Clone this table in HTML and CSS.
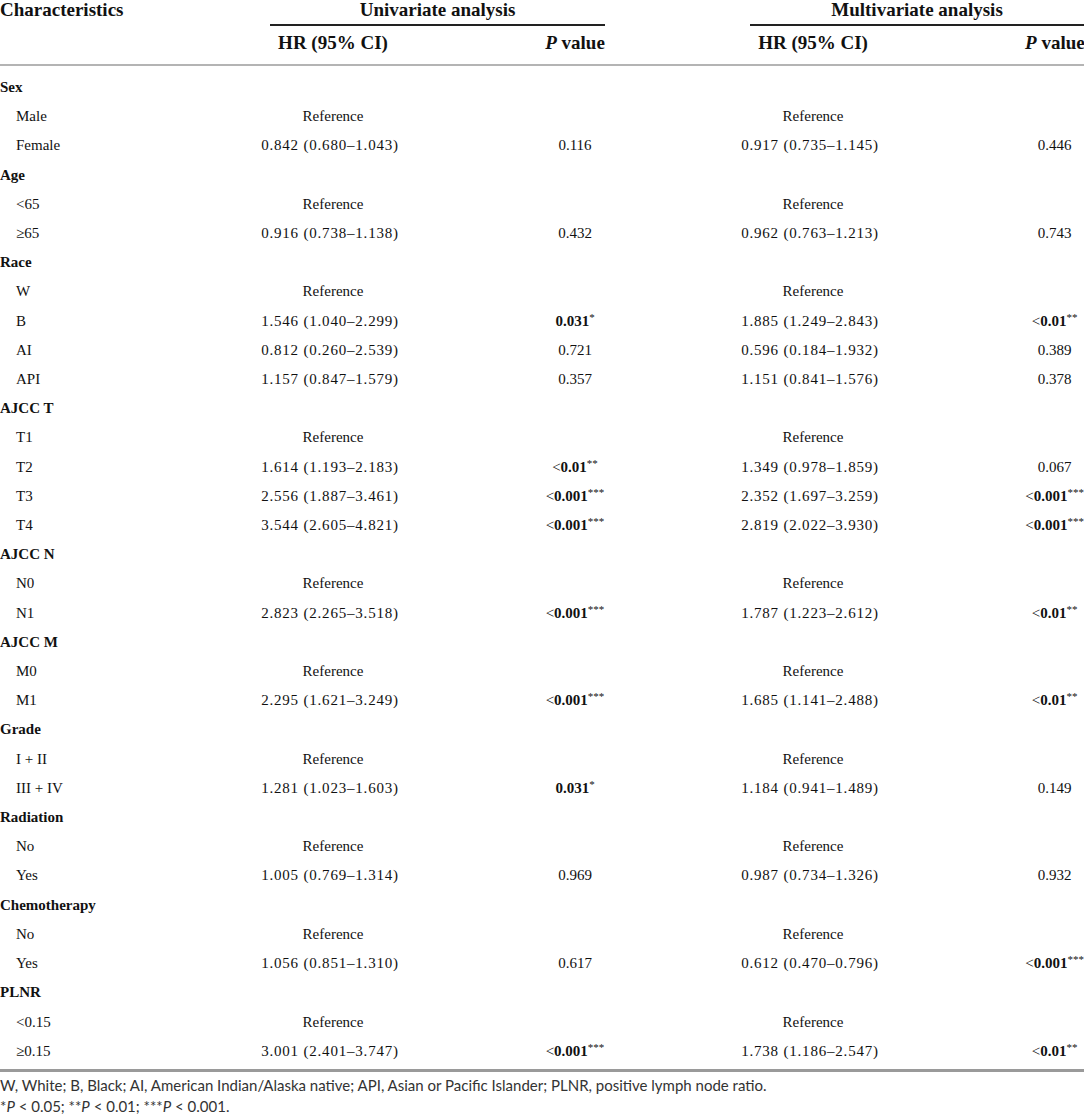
FILE: index.html
```html
<!DOCTYPE html>
<html>
<head>
<meta charset="utf-8">
<link rel="stylesheet" href="styles.css">
</head>
<body>
<table class="tbl">
<colgroup>
<col class="c-char"><col class="c-hr"><col class="c-gap"><col class="c-p"><col class="c-mid"><col class="c-hr"><col class="c-gap"><col class="c-p2">
</colgroup>
<thead>
<tr class="h1">
<th class="th-char">Characteristics</th>
<th colspan="3" class="th-group"><div class="group-title">Univariate analysis</div></th>
<th></th>
<th colspan="3" class="th-group"><div class="group-title">Multivariate analysis</div></th>
</tr>
<tr class="h2">
<th></th>
<th class="ctr">HR (95% CI)</th>
<th></th>
<th class="ctr"><i>P</i> value</th>
<th></th>
<th class="ctr">HR (95% CI)</th>
<th></th>
<th class="ctr"><i>P</i> value</th>
</tr>
</thead>
<tbody>
<tr class="grp first"><td>Sex</td><td></td><td></td><td></td><td></td><td></td><td></td><td></td></tr>
<tr><td class="sub">Male</td><td class="ctr">Reference</td><td></td><td></td><td></td><td class="ctr">Reference</td><td></td><td></td></tr>
<tr><td class="sub">Female</td><td class="ctr hr">0.842 (0.680–1.043)</td><td></td><td class="ctr">0.116</td><td></td><td class="ctr hr">0.917 (0.735–1.145)</td><td></td><td class="ctr">0.446</td></tr>

<tr class="grp"><td>Age</td><td></td><td></td><td></td><td></td><td></td><td></td><td></td></tr>
<tr><td class="sub">&lt;65</td><td class="ctr">Reference</td><td></td><td></td><td></td><td class="ctr">Reference</td><td></td><td></td></tr>
<tr><td class="sub">≥65</td><td class="ctr hr">0.916 (0.738–1.138)</td><td></td><td class="ctr">0.432</td><td></td><td class="ctr hr">0.962 (0.763–1.213)</td><td></td><td class="ctr">0.743</td></tr>

<tr class="grp"><td>Race</td><td></td><td></td><td></td><td></td><td></td><td></td><td></td></tr>
<tr><td class="sub">W</td><td class="ctr">Reference</td><td></td><td></td><td></td><td class="ctr">Reference</td><td></td><td></td></tr>
<tr><td class="sub">B</td><td class="ctr hr">1.546 (1.040–2.299)</td><td></td><td class="ctr"><b>0.031</b><sup>*</sup></td><td></td><td class="ctr hr">1.885 (1.249–2.843)</td><td></td><td class="ctr">&lt;<b>0.01</b><sup>**</sup></td></tr>
<tr><td class="sub">AI</td><td class="ctr hr">0.812 (0.260–2.539)</td><td></td><td class="ctr">0.721</td><td></td><td class="ctr hr">0.596 (0.184–1.932)</td><td></td><td class="ctr">0.389</td></tr>
<tr><td class="sub">API</td><td class="ctr hr">1.157 (0.847–1.579)</td><td></td><td class="ctr">0.357</td><td></td><td class="ctr hr">1.151 (0.841–1.576)</td><td></td><td class="ctr">0.378</td></tr>

<tr class="grp"><td>AJCC T</td><td></td><td></td><td></td><td></td><td></td><td></td><td></td></tr>
<tr><td class="sub">T1</td><td class="ctr">Reference</td><td></td><td></td><td></td><td class="ctr">Reference</td><td></td><td></td></tr>
<tr><td class="sub">T2</td><td class="ctr hr">1.614 (1.193–2.183)</td><td></td><td class="ctr">&lt;<b>0.01</b><sup>**</sup></td><td></td><td class="ctr hr">1.349 (0.978–1.859)</td><td></td><td class="ctr">0.067</td></tr>
<tr><td class="sub">T3</td><td class="ctr hr">2.556 (1.887–3.461)</td><td></td><td class="ctr">&lt;<b>0.001</b><sup>***</sup></td><td></td><td class="ctr hr">2.352 (1.697–3.259)</td><td></td><td class="ctr">&lt;<b>0.001</b><sup>***</sup></td></tr>
<tr><td class="sub">T4</td><td class="ctr hr">3.544 (2.605–4.821)</td><td></td><td class="ctr">&lt;<b>0.001</b><sup>***</sup></td><td></td><td class="ctr hr">2.819 (2.022–3.930)</td><td></td><td class="ctr">&lt;<b>0.001</b><sup>***</sup></td></tr>

<tr class="grp"><td>AJCC N</td><td></td><td></td><td></td><td></td><td></td><td></td><td></td></tr>
<tr><td class="sub">N0</td><td class="ctr">Reference</td><td></td><td></td><td></td><td class="ctr">Reference</td><td></td><td></td></tr>
<tr><td class="sub">N1</td><td class="ctr hr">2.823 (2.265–3.518)</td><td></td><td class="ctr">&lt;<b>0.001</b><sup>***</sup></td><td></td><td class="ctr hr">1.787 (1.223–2.612)</td><td></td><td class="ctr">&lt;<b>0.01</b><sup>**</sup></td></tr>

<tr class="grp"><td>AJCC M</td><td></td><td></td><td></td><td></td><td></td><td></td><td></td></tr>
<tr><td class="sub">M0</td><td class="ctr">Reference</td><td></td><td></td><td></td><td class="ctr">Reference</td><td></td><td></td></tr>
<tr><td class="sub">M1</td><td class="ctr hr">2.295 (1.621–3.249)</td><td></td><td class="ctr">&lt;<b>0.001</b><sup>***</sup></td><td></td><td class="ctr hr">1.685 (1.141–2.488)</td><td></td><td class="ctr">&lt;<b>0.01</b><sup>**</sup></td></tr>

<tr class="grp"><td>Grade</td><td></td><td></td><td></td><td></td><td></td><td></td><td></td></tr>
<tr><td class="sub">I + II</td><td class="ctr">Reference</td><td></td><td></td><td></td><td class="ctr">Reference</td><td></td><td></td></tr>
<tr><td class="sub">III + IV</td><td class="ctr hr">1.281 (1.023–1.603)</td><td></td><td class="ctr"><b>0.031</b><sup>*</sup></td><td></td><td class="ctr hr">1.184 (0.941–1.489)</td><td></td><td class="ctr">0.149</td></tr>

<tr class="grp"><td>Radiation</td><td></td><td></td><td></td><td></td><td></td><td></td><td></td></tr>
<tr><td class="sub">No</td><td class="ctr">Reference</td><td></td><td></td><td></td><td class="ctr">Reference</td><td></td><td></td></tr>
<tr><td class="sub">Yes</td><td class="ctr hr">1.005 (0.769–1.314)</td><td></td><td class="ctr">0.969</td><td></td><td class="ctr hr">0.987 (0.734–1.326)</td><td></td><td class="ctr">0.932</td></tr>

<tr class="grp"><td>Chemotherapy</td><td></td><td></td><td></td><td></td><td></td><td></td><td></td></tr>
<tr><td class="sub">No</td><td class="ctr">Reference</td><td></td><td></td><td></td><td class="ctr">Reference</td><td></td><td></td></tr>
<tr><td class="sub">Yes</td><td class="ctr hr">1.056 (0.851–1.310)</td><td></td><td class="ctr">0.617</td><td></td><td class="ctr hr">0.612 (0.470–0.796)</td><td></td><td class="ctr">&lt;<b>0.001</b><sup>***</sup></td></tr>

<tr class="grp"><td>PLNR</td><td></td><td></td><td></td><td></td><td></td><td></td><td></td></tr>
<tr><td class="sub">&lt;0.15</td><td class="ctr">Reference</td><td></td><td></td><td></td><td class="ctr">Reference</td><td></td><td></td></tr>
<tr class="last"><td class="sub">≥0.15</td><td class="ctr hr">3.001 (2.401–3.747)</td><td></td><td class="ctr">&lt;<b>0.001</b><sup>***</sup></td><td></td><td class="ctr hr">1.738 (1.186–2.547)</td><td></td><td class="ctr">&lt;<b>0.01</b><sup>**</sup></td></tr>
</tbody>
</table>
<div class="notes">
<p class="note">W, White; B, Black; AI, American Indian/Alaska native; API, Asian or Pacific Islander; PLNR, positive lymph node ratio.</p>
<p class="note">*<i>P</i> &lt; 0.05; **<i>P</i> &lt; 0.01; ***<i>P</i> &lt; 0.001.</p>
</div>
</body>
</html>
```
FILE: styles.css
```css
html, body {
  margin: 0;
  padding: 0;
  background: #fff;
}
body {
  width: 1084px;
  color: #111;
  font-family: "Liberation Serif", "Times New Roman", serif;
}
.tbl {
  width: 1084px;
  table-layout: fixed;
  border-collapse: collapse;
  border-spacing: 0;
  font-size: 15px;
}
.c-char { width: 253px; }
.c-hr { width: 160px; }
.c-gap { width: 132px; }
.c-p { width: 60px; }
.c-mid { width: 128px; }
.c-p2 { width: 59px; }

.tbl th, .tbl td {
  padding: 0;
  white-space: nowrap;
  overflow: visible;
}
.tbl thead th {
  font-size: 19px;
  font-weight: bold;
  line-height: 20px;
  text-align: left;
  vertical-align: top;
}
.tbl .h1 th { height: 26px; }
.th-group { text-align: center; }
.group-title {
  margin-left: 17px;
  text-align: center;
  padding-bottom: 4px;
  border-bottom: 2px solid #222;
}
.tbl .h2 th {
  padding-top: 7px;
  padding-bottom: 11px;
  border-bottom: 2px solid #b4b4b4;
}
.tbl thead th.ctr { text-align: center; }
.tbl td {
  line-height: 29.2px;
  height: 29.2px;
  vertical-align: middle;
}
.tbl tr.first td { padding-top: 7px; }
.tbl tr.last td { padding-bottom: 3px; }
.tbl tr.last { border-bottom: 3px solid #9a9a9a; }
.grp td:first-child { font-weight: bold; }
.sub { padding-left: 16px !important; }
.ctr { text-align: center; }
.tbl td.hr { letter-spacing: 0.8px; padding-right: 6px; }
sup {
  font-size: 11px;
  font-weight: normal;
  line-height: 0;
  vertical-align: 5px;
  letter-spacing: 0;
}
.notes {
  margin-top: 3px;
  font-family: Lato, "Open Sans", sans-serif;
  font-size: 15px;
  color: #333;
}
.note {
  margin: 0;
  line-height: 21px;
}
```
